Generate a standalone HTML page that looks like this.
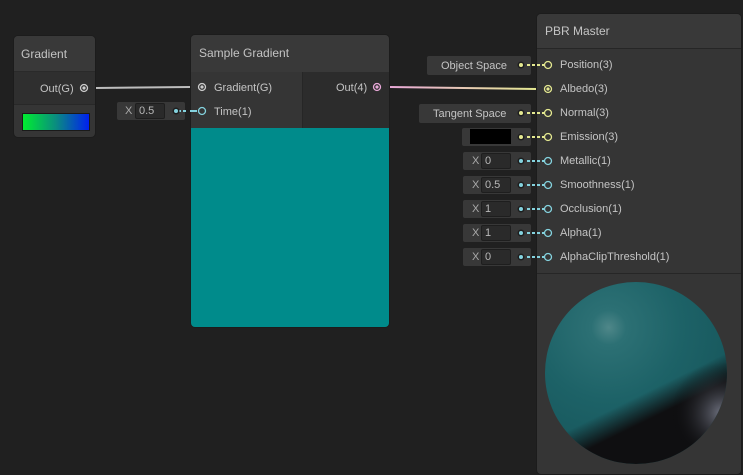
<!DOCTYPE html><html><head><style>
body{margin:0;width:743px;height:473px;background:#202020;overflow:hidden;position:relative;font-family:"Liberation Sans",sans-serif;font-size:11px;color:#c4c4c4}
div{position:absolute;box-sizing:border-box}
.t{white-space:nowrap;line-height:14px}
.fld{background:#383838;border-radius:2px}
.inp{background:#2a2a2a;border:1px solid #1e1e1e;border-radius:2px;color:#b8b8b8;font-size:11px;line-height:15px;padding-left:3px}
</style></head><body>
<svg width="743" height="473" style="position:absolute;left:0;top:0">
<defs><linearGradient id="pg" x1="0" x2="1"><stop offset="0" stop-color="#e8a8d8"/><stop offset="1" stop-color="#e4e890"/></linearGradient></defs>
<line x1="96" y1="88" x2="190" y2="87" stroke="#bdbdbd" stroke-width="2"/>
<line x1="389" y1="87" x2="537" y2="89" stroke="url(#pg)" stroke-width="2"/>
</svg>

<div style="left:13px;top:35px;width:83px;height:103px;border-radius:5px;overflow:hidden;background:#353535;border:1px solid #1c1c1c">
 <div style="left:0;top:0;width:83px;height:36px;background:#393939;border-bottom:1px solid #2a2a2a"></div>
 <div class="t" style="left:7px;top:11px;font-size:12px">Gradient</div>
 <div style="left:0;top:36px;width:83px;height:33px;background:#2f2f2f;border-bottom:1px solid #282828"></div>
 <div class="t" style="left:26px;top:46px">Out(G)</div>
 <div style="left:8px;top:77px;width:68px;height:18px;border:1px solid #1a1a1a;background:linear-gradient(90deg,#00ee30,#0a8c80 50%,#0020f0)"></div>
</div>
<svg width="743" height="473" style="position:absolute;left:0;top:0">
<circle cx="84" cy="88" r="3.5" fill="none" stroke="#ccc" stroke-width="1.3"/><circle cx="84" cy="88" r="1.6" fill="#ccc"/>
</svg>

<div class="fld" style="left:117px;top:102px;width:68px;height:18px"></div>
<div class="t" style="left:125px;top:104px;color:#aaa">X</div>
<div class="inp" style="left:135px;top:103px;width:30px;height:16px">0.5</div>

<div style="left:190px;top:34px;width:200px;height:294px;border-radius:5px;overflow:hidden;background:#2c2c2c;border:1px solid #1c1c1c">
 <div style="left:0;top:0;width:200px;height:37px;background:#393939"></div>
 <div class="t" style="left:8px;top:11px;font-size:12px">Sample Gradient</div>
 <div style="left:0;top:37px;width:112px;height:56px;background:#353535;border-right:1px solid #262626"></div>
 <div class="t" style="left:23px;top:46px">Gradient(G)</div>
 <div class="t" style="left:23px;top:70px">Time(1)</div>
 <div class="t" style="left:145px;top:46px">Out(4)</div>
 <div style="left:0;top:93px;width:200px;height:201px;background:#008b8b"></div>
</div>

<div style="left:536px;top:13px;width:206px;height:462px;border-radius:5px;overflow:hidden;background:#353535;border:1px solid #1c1c1c">
 <div style="left:0;top:0;width:206px;height:35px;background:#393939;border-bottom:1px solid #262626"></div>
 <div class="t" style="left:8px;top:10px;font-size:12px">PBR Master</div>
 <div style="left:0;top:259px;width:206px;height:1px;background:#262626"></div>
</div>
<div class="t" style="left:560px;top:58px">Position(3)</div>
<div class="t" style="left:560px;top:82px">Albedo(3)</div>
<div class="t" style="left:560px;top:106px">Normal(3)</div>
<div class="t" style="left:560px;top:130px">Emission(3)</div>
<div class="t" style="left:560px;top:154px">Metallic(1)</div>
<div class="t" style="left:560px;top:178px">Smoothness(1)</div>
<div class="t" style="left:560px;top:202px">Occlusion(1)</div>
<div class="t" style="left:560px;top:226px">Alpha(1)</div>
<div class="t" style="left:560px;top:250px">AlphaClipThreshold(1)</div>

<div class="fld" style="left:427px;top:56px;width:104px;height:19px"></div>
<div class="t" style="left:441px;top:59px">Object Space</div>
<div class="fld" style="left:419px;top:104px;width:112px;height:19px"></div>
<div class="t" style="left:433px;top:107px">Tangent Space</div>
<div class="fld" style="left:462px;top:128px;width:69px;height:18px"></div>
<div style="left:470px;top:129px;width:41px;height:15px;background:#000"></div>
<div class="fld" style="left:463px;top:152px;width:68px;height:18px"></div>
<div class="t" style="left:472px;top:154px;color:#aaa">X</div><div class="inp" style="left:481px;top:153px;width:30px;height:16px">0</div>
<div class="fld" style="left:463px;top:176px;width:68px;height:18px"></div>
<div class="t" style="left:472px;top:178px;color:#aaa">X</div><div class="inp" style="left:481px;top:177px;width:30px;height:16px">0.5</div>
<div class="fld" style="left:463px;top:200px;width:68px;height:18px"></div>
<div class="t" style="left:472px;top:202px;color:#aaa">X</div><div class="inp" style="left:481px;top:201px;width:30px;height:16px">1</div>
<div class="fld" style="left:463px;top:224px;width:68px;height:18px"></div>
<div class="t" style="left:472px;top:226px;color:#aaa">X</div><div class="inp" style="left:481px;top:225px;width:30px;height:16px">1</div>
<div class="fld" style="left:463px;top:248px;width:68px;height:18px"></div>
<div class="t" style="left:472px;top:250px;color:#aaa">X</div><div class="inp" style="left:481px;top:249px;width:30px;height:16px">0</div>

<svg width="743" height="473" style="position:absolute;left:0;top:0">
<defs>
<radialGradient id="sp" cx="0.35" cy="0.25" r="0.8">
<stop offset="0" stop-color="#4f8789"/><stop offset="0.12" stop-color="#2c7074"/><stop offset="0.5" stop-color="#1d6267"/><stop offset="1" stop-color="#16555a"/></radialGradient>
<linearGradient id="dk" x1="0.35" y1="0.4" x2="0.62" y2="0.95"><stop offset="0.45" stop-color="#0f0f11" stop-opacity="0"/><stop offset="0.68" stop-color="#0f0f11" stop-opacity="1"/><stop offset="1" stop-color="#0f0f11"/></linearGradient>
<radialGradient id="rim" cx="0.97" cy="0.72" r="0.28"><stop offset="0" stop-color="#9094a6" stop-opacity="0.75"/><stop offset="1" stop-color="#000" stop-opacity="0"/></radialGradient>
</defs>
<circle cx="636" cy="373" r="91" fill="url(#sp)"/>
<circle cx="636" cy="373" r="91" fill="url(#dk)"/>
<circle cx="636" cy="373" r="91" fill="url(#rim)"/>
<line x1="190" y1="111" x2="197" y2="111" stroke="#84d2de" stroke-width="2"/>
<line x1="178" y1="111" x2="188" y2="111" stroke="#84d2de" stroke-width="2" stroke-dasharray="3,2"/>
<circle cx="176" cy="111" r="3.5" fill="#1e1e1e"/><circle cx="176" cy="111" r="2" fill="#84d2de"/>
<circle cx="202" cy="87" r="3.5" fill="none" stroke="#ccc" stroke-width="1.3"/><circle cx="202" cy="87" r="1.6" fill="#ccc"/>
<circle cx="202" cy="111" r="3.5" fill="none" stroke="#84d2de" stroke-width="1.3"/>
<circle cx="377" cy="87" r="3.5" fill="none" stroke="#e8a8d8" stroke-width="1.3"/><circle cx="377" cy="87" r="1.6" fill="#e8a8d8"/>
<g stroke-width="1.3" fill="none">
<circle cx="548" cy="65" r="3.5" stroke="#e4e890"/>
<circle cx="548" cy="89" r="3.5" stroke="#e4e890"/><circle cx="548" cy="89" r="1.6" fill="#e4e890" stroke="none"/>
<circle cx="548" cy="113" r="3.5" stroke="#e4e890"/>
<circle cx="548" cy="137" r="3.5" stroke="#e4e890"/>
<circle cx="548" cy="161" r="3.5" stroke="#84d2de"/>
<circle cx="548" cy="185" r="3.5" stroke="#84d2de"/>
<circle cx="548" cy="209" r="3.5" stroke="#84d2de"/>
<circle cx="548" cy="233" r="3.5" stroke="#84d2de"/>
<circle cx="548" cy="257" r="3.5" stroke="#84d2de"/>
</g>
<g stroke-width="2" stroke-dasharray="3,2">
<line x1="527" y1="65" x2="544" y2="65" stroke="#e4e890"/>
<line x1="527" y1="113" x2="544" y2="113" stroke="#e4e890"/>
<line x1="527" y1="137" x2="544" y2="137" stroke="#e4e890"/>
<line x1="527" y1="161" x2="544" y2="161" stroke="#84d2de"/>
<line x1="527" y1="185" x2="544" y2="185" stroke="#84d2de"/>
<line x1="527" y1="209" x2="544" y2="209" stroke="#84d2de"/>
<line x1="527" y1="233" x2="544" y2="233" stroke="#84d2de"/>
<line x1="527" y1="257" x2="544" y2="257" stroke="#84d2de"/>
</g>
<g fill="#1e1e1e"><circle cx="521" cy="65" r="3.5"/><circle cx="521" cy="113" r="3.5"/><circle cx="521" cy="137" r="3.5"/><circle cx="521" cy="161" r="3.5"/><circle cx="521" cy="185" r="3.5"/><circle cx="521" cy="209" r="3.5"/><circle cx="521" cy="233" r="3.5"/><circle cx="521" cy="257" r="3.5"/></g>
<g fill="#e4e890"><circle cx="521" cy="65" r="2"/><circle cx="521" cy="113" r="2"/><circle cx="521" cy="137" r="2"/></g>
<g fill="#84d2de"><circle cx="521" cy="161" r="2"/><circle cx="521" cy="185" r="2"/><circle cx="521" cy="209" r="2"/><circle cx="521" cy="233" r="2"/><circle cx="521" cy="257" r="2"/></g>
</svg>
</body></html>
